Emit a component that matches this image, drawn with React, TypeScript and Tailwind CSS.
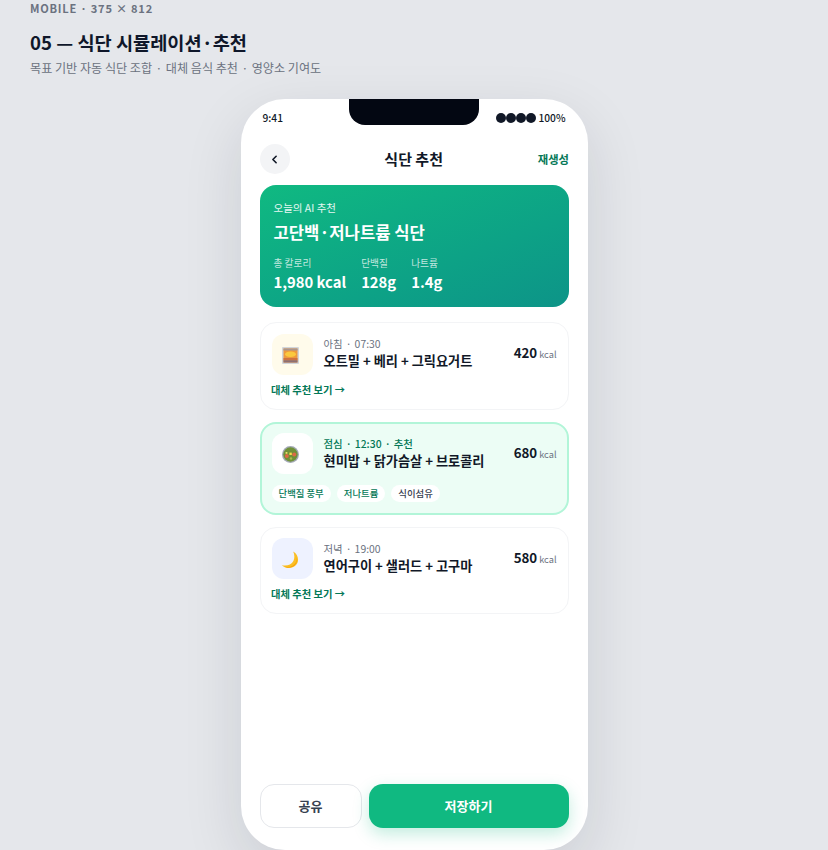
import { ChevronLeft } from 'lucide-react';
import type { ReactNode } from 'react';

const font = { fontFamily: '"Noto Sans CJK KR", "Noto Sans", sans-serif' };

const Dot = () => <span className="mx-[0.75px]">·</span>;

const Stat = ({ label, value }: { label: string; value: string }) => (
  <div>
    <p className="text-[9.7px] leading-[14px] text-white/75">{label}</p>
    <p className="text-[14.8px] leading-[20px] font-bold text-white mt-[2px]">{value}</p>
  </div>
);

const Alt = () => (
  <p className="mt-[7px] -ml-[0.5px] text-[10.3px] leading-[16px] font-bold text-[#047857]">대체 추천 보기 →</p>
);

const Sunrise = () => (
  <svg width="17" height="17" viewBox="0 0 17 17" className="mr-[4px] mt-[2px]">
    <rect width="17" height="17" rx="1" fill="#d1d5db" />
    <rect x="1.5" y="1.5" width="14" height="14" fill="#ee9a3c" />
    <rect x="1.5" y="1.5" width="14" height="2" fill="#a9958f" />
    <ellipse cx="8.5" cy="7.2" rx="5.5" ry="2.8" fill="#fbc93d" />
    <rect x="1.5" y="11" width="14" height="2.2" fill="#cf7340" />
    <rect x="1.5" y="13.2" width="14" height="2.3" fill="#8d6f74" />
  </svg>
);

const Salad = () => (
  <svg width="17" height="17" viewBox="0 0 17 17" className="mr-[4px] mt-[2px]">
    <circle cx="8.5" cy="8.5" r="8.5" fill="#a3a9b5" />
    <circle cx="8.5" cy="8.5" r="7.2" fill="#6f9138" />
    <circle cx="4.8" cy="10" r="2" fill="#dd6a45" />
    <circle cx="12.2" cy="8.6" r="2" fill="#dd6a45" />
    <rect x="7.4" y="6.6" width="2.4" height="2.4" fill="#f5dc4a" />
    <rect x="3.6" y="6" width="1.8" height="1.8" fill="#e8e06a" />
    <circle cx="9" cy="12.5" r="1.2" fill="#a9bd4e" />
  </svg>
);

const Moon = () => (
  <svg width="18" height="18" viewBox="0 0 18 18" className="mr-[4px] mt-[2px]">
    <path d="M12.2 0.6 C17 3.4 18.6 9.6 15.4 13.6 C12.2 17.8 5.4 18.4 0.8 14.2 C5.6 15.4 10.4 13.8 12.4 10 C13.8 7 13.6 3.4 12.2 0.6 Z" fill="#fbbf24" />
    <path d="M15.6 6.4 C16.2 9.8 14.6 13 11.6 14.8 C9 16.2 5.6 16.4 3 15.2 C7.2 17.8 13 16.4 15 12.6 C16 10.8 16.2 8.4 15.6 6.4 Z" fill="#f59e0b" />
  </svg>
);

const MealHead = ({
  icon,
  tile,
  meta,
  metaColor,
  name,
  kcal,
}: {
  icon: ReactNode;
  tile: string;
  meta: ReactNode;
  metaColor: string;
  name: string;
  kcal: string;
}) => (
  <div className="flex items-center gap-[11px]">
    <div className={`w-[41px] h-[41px] rounded-[12px] flex items-center justify-center ${tile}`}>{icon}</div>
    <div className="flex-1 min-w-0 pb-[2px]">
      <p className={`text-[10.4px] leading-[16px] ${metaColor}`}>{meta}</p>
      <p className="text-[13.2px] leading-[18px] font-bold text-[#111827]">{name}</p>
    </div>
    <p className="text-[13.3px] leading-[20px] font-bold text-[#111827] whitespace-nowrap -mt-[1px]">
      {kcal} <span className="text-[9.2px] font-normal text-[#6b7280] -ml-[1px]">kcal</span>
    </p>
  </div>
);

export default function App() {
  return (
    <div className="h-[850px] overflow-hidden bg-[#e5e7eb]" style={font}>
      <div className="px-[30px]">
        <p className="text-[11.1px] leading-[16px] font-bold tracking-[0.75px] text-[#6b7280]">MOBILE · 375 × 812</p>
        <h1 className="mt-[13.5px] text-[18.65px] leading-[24px] font-bold text-[#0f172a]">05 — 식단 시뮬레이션·추천</h1>
        <p className="mt-[6.5px] text-[12.1px] leading-[16px] text-[#6b7280]">
          목표 기반 자동 식단 조합 <Dot /> 대체 음식 추천 <Dot /> 영양소 기여도
        </p>
      </div>

      <div className="relative mx-auto mt-[23px] w-[347px] h-[751px] rounded-[44px] bg-white shadow-[0_20px_60px_rgba(17,24,39,0.12)] overflow-hidden">
        <div className="absolute left-[108px] top-0 w-[130px] h-[26px] rounded-b-[16px] bg-[#030712]" />

        <div className="flex items-center justify-between pl-[22px] pr-[22px] h-[38px] text-[10.2px] font-medium text-[#111827]">
          <span>9:41</span>
          <span className="flex items-center gap-[3px]">
            <span className="flex gap-[0.5px]">
              <i className="block w-[9.5px] h-[9.5px] rounded-full bg-[#111827]" />
              <i className="block w-[9.5px] h-[9.5px] rounded-full bg-[#111827]" />
              <i className="block w-[9.5px] h-[9.5px] rounded-full bg-[#111827]" />
              <i className="block w-[9.5px] h-[9.5px] rounded-full bg-[#111827]" />
            </span>
            100%
          </span>
        </div>

        <div className="px-[19px]">
          <div className="flex items-center justify-between h-[30px] mt-[7px]">
            <button className="w-[30px] h-[30px] rounded-full bg-[#f3f4f6] flex items-center justify-center text-[#111827]">
              <ChevronLeft size={13} strokeWidth={3} />
            </button>
            <span className="text-[15px] font-bold text-[#111827]">식단 추천</span>
            <span className="text-[11.3px] font-bold text-[#047857] -mr-[0.5px]">재생성</span>
          </div>

          <section className="mt-[11px] h-[122px] rounded-[16px] bg-gradient-to-br from-[#10b981] to-[#0d9488] px-[14px] pt-[14.5px]">
            <p className="text-[10.5px] leading-[16px] text-white/90">오늘의 AI 추천</p>
            <h2 className="mt-[4.5px] text-[16.65px] leading-[25px] font-bold text-white">고단백·저나트륨 식단</h2>
            <div className="mt-[11px] flex gap-[15px]">
              <Stat label="총 칼로리" value="1,980 kcal" />
              <Stat label="단백질" value="128g" />
              <Stat label="나트륨" value="1.4g" />
            </div>
          </section>

          <div className="mt-[15px] flex flex-col gap-[11.5px]">
            <article className="h-[88px] rounded-[16px] border border-[#f3f4f6] bg-white px-[11px] pt-[10.5px]">
              <MealHead
                icon={<Sunrise />}
                tile="bg-[#fffbeb]"
                meta={<>아침 <Dot /> 07:30</>}
                metaColor="text-[#6b7280]"
                name="오트밀 + 베리 + 그릭요거트"
                kcal="420"
              />
              <Alt />
            </article>

            <article className="h-[93.5px] rounded-[16px] border-2 border-[#b2f5d8] bg-[#ecfdf5] px-[10px] pt-[9.5px]">
              <MealHead
                icon={<Salad />}
                tile="bg-white"
                meta={<>점심 <Dot /> 12:30 <Dot /> 추천</>}
                metaColor="text-[#047857] font-medium"
                name="현미밥 + 닭가슴살 + 브로콜리"
                kcal="680"
              />
              <div className="mt-[11px] flex gap-[6px] text-[9.4px] leading-[17px] font-medium">
                <span className="rounded-full bg-white px-[7px] text-[#047857]">단백질 풍부</span>
                <span className="rounded-full bg-white px-[7px] text-[#047857]">저나트륨</span>
                <span className="rounded-full bg-white px-[7px] text-[#374151]">식이섬유</span>
              </div>
            </article>

            <article className="h-[87.5px] rounded-[16px] border border-[#f3f4f6] bg-white px-[11px] pt-[10.5px]">
              <MealHead
                icon={<Moon />}
                tile="bg-[#eef2ff]"
                meta={<>저녁 <Dot /> 19:00</>}
                metaColor="text-[#6b7280]"
                name="연어구이 + 샐러드 + 고구마"
                kcal="580"
              />
              <Alt />
            </article>
          </div>
        </div>

        <div className="absolute left-[19px] right-[19px] top-[685px] flex gap-[7px]">
          <button className="w-[102px] h-[44px] rounded-[14px] border border-[#e5e7eb] bg-white text-[13px] font-bold text-[#374151]">
            공유
          </button>
          <button className="flex-1 h-[44px] rounded-[14px] bg-[#10b981] text-[13px] font-bold text-white shadow-[0_6px_16px_rgba(16,185,129,0.25)]">
            저장하기
          </button>
        </div>
      </div>
    </div>
  );
}
